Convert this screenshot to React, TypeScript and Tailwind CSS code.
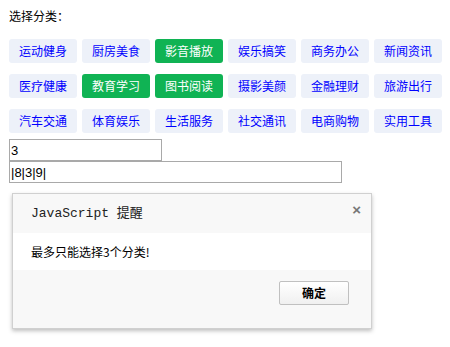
import React from 'react';

const categories: { name: string; active?: boolean }[] = [
  { name: '运动健身' },
  { name: '厨房美食' },
  { name: '影音播放', active: true },
  { name: '娱乐搞笑' },
  { name: '商务办公' },
  { name: '新闻资讯' },
  { name: '医疗健康' },
  { name: '教育学习', active: true },
  { name: '图书阅读', active: true },
  { name: '摄影美颜' },
  { name: '金融理财' },
  { name: '旅游出行' },
  { name: '汽车交通' },
  { name: '体育娱乐' },
  { name: '生活服务' },
  { name: '社交通讯' },
  { name: '电商购物' },
  { name: '实用工具' },
];

const App: React.FC = () => {
  return (
    <div className="min-h-screen bg-white pl-[9px] pt-[8px] font-['Noto_Sans_CJK_SC',sans-serif] text-[12px] text-black">
      <div className="h-[16px] leading-[16px]">选择分类：</div>

      <div className="mt-[15px] grid w-[433px] grid-cols-6 gap-x-[5px] gap-y-[11px]">
        {categories.map((c) => (
          <div
            key={c.name}
            className={
              c.active
                ? 'flex h-[24px] w-[68px] items-center justify-center rounded-[3px] bg-[#10b354] text-white'
                : 'flex h-[24px] w-[68px] items-center justify-center rounded-[3px] bg-[#edf1f9] text-[#0000ff]'
            }
          >
            {c.name}
          </div>
        ))}
      </div>

      <div className="mt-[6px] flex flex-col font-['Liberation_Sans',Arial,sans-serif] text-[13px]">
        <input
          readOnly
          value="3"
          className="h-[22px] w-[153px] border border-[#a9a9a9] px-[1px] outline-none"
        />
        <input
          readOnly
          value="|8|3|9|"
          className="h-[22px] w-[333px] border border-[#a9a9a9] px-[1px] outline-none"
        />
      </div>

      <div className="mt-[10px] ml-[3px] flex w-[360px] flex-col border border-[#d0d0d0] shadow-[0_2px_4px_rgba(0,0,0,0.25)]">
        <div className="relative flex h-[39px] items-center bg-[#f8f8f8] pl-[18px] pt-[1px] font-['Liberation_Mono','Noto_Sans_CJK_SC',monospace] text-[13px] text-[#222]">
          JavaScript 提醒
          <span className="absolute right-[10px] top-[5px] font-['Liberation_Sans',Arial,sans-serif] text-[15px] font-bold text-[#777]">
            ×
          </span>
        </div>
        <div className="flex h-[37px] items-center bg-white pl-[18px] text-[12px]">
          最多只能选择3个分类!
        </div>
        <div className="flex h-[58px] justify-end bg-[#f8f8f8] pt-[11px] pr-[22px]">
          <button className="h-[24px] w-[70px] rounded-[2px] border border-[#c0c0c0] bg-gradient-to-b from-white to-[#f0f0f0] text-[12px] font-bold text-black">
            确定
          </button>
        </div>
      </div>
    </div>
  );
};

export default App;
